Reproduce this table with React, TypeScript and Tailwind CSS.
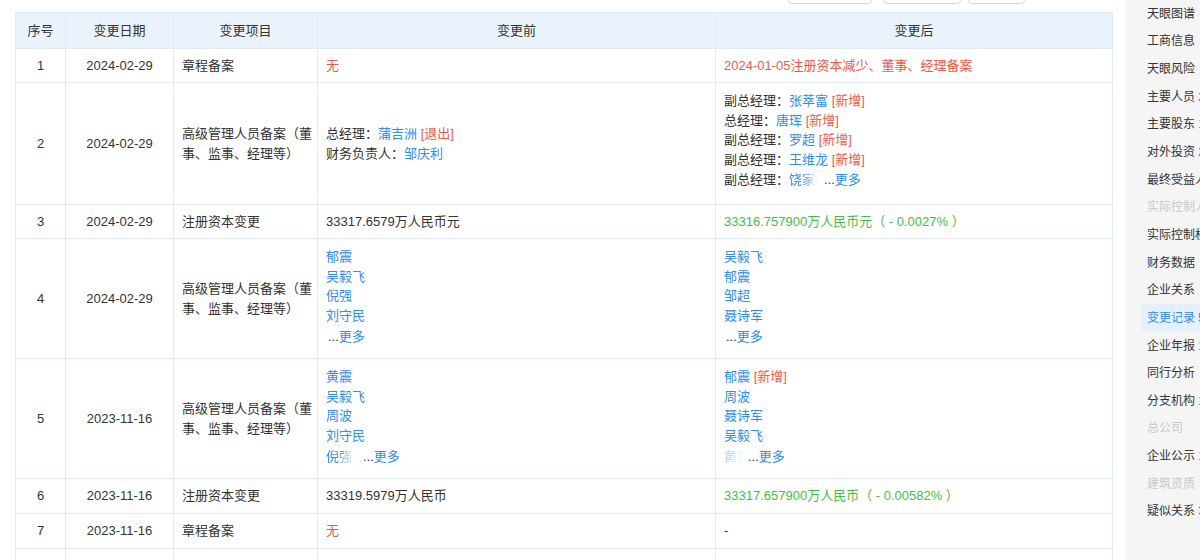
import type { ReactNode } from "react";

type Nav = { label: string; count?: string; state?: "off" | "on" };

const NAV: Nav[] = [
  { label: "天眼图谱" },
  { label: "工商信息" },
  { label: "天眼风险" },
  { label: "主要人员", count: "2" },
  { label: "主要股东", count: "1" },
  { label: "对外投资", count: "2" },
  { label: "最终受益人" },
  { label: "实际控制人", state: "off" },
  { label: "实际控制权" },
  { label: "财务数据" },
  { label: "企业关系" },
  { label: "变更记录", count: "5", state: "on" },
  { label: "企业年报", count: "1" },
  { label: "同行分析" },
  { label: "分支机构", count: "1" },
  { label: "总公司", state: "off" },
  { label: "企业公示", count: "1" },
  { label: "建筑资质", state: "off" },
  { label: "疑似关系", count: "3" },
];

const Name = ({ children }: { children: ReactNode }) => <span className="text-[#2f8cf0]">{children}</span>;
const Tag = ({ children }: { children: ReactNode }) => <span className="text-[#f0584a]"> [{children}]</span>;
const More = () => (
  <span>
    <span className="text-[#333]">...</span>
    <span className="text-[#2f8cf0]">更多</span>
  </span>
);

const td = "border border-[#e0ebf7] px-2 align-middle";
const tdTop = "border border-[#e0ebf7] pl-2 pr-2 pt-2 align-top";

export default function App() {
  return (
    <div className="flex h-[560px] w-[1200px] overflow-hidden bg-white font-['Liberation_Sans','Noto_Sans_CJK_SC',sans-serif] text-[13px] text-[#333]">
      <main className="flex w-[1127px] flex-col pl-[15px]">
        <div className="flex h-[12px] shrink-0 pl-[773px]">
          <div className="-mt-6 h-7 w-[84px] rounded border border-[#d6d6d6] bg-white" />
          <div className="-mt-6 ml-[11px] h-7 w-[78px] rounded border border-[#d6d6d6] bg-white" />
          <div className="-mt-6 ml-[7px] h-7 w-[57px] rounded border border-[#d6d6d6] bg-white" />
        </div>

        <table className="w-[1097px] shrink-0 table-fixed border-collapse leading-[19.5px]">
          <colgroup>
            <col className="w-[50px]" />
            <col className="w-[108px]" />
            <col className="w-[144px]" />
            <col className="w-[398px]" />
            <col className="w-[397px]" />
          </colgroup>
          <thead>
            <tr className="h-[36px] bg-[#eaf3fc]">
              <th className={`${td} text-center font-normal`}>序号</th>
              <th className={`${td} text-center font-normal`}>变更日期</th>
              <th className={`${td} text-center font-normal`}>变更项目</th>
              <th className={`${td} text-center font-normal`}>变更前</th>
              <th className={`${td} text-center font-normal`}>变更后</th>
            </tr>
          </thead>
          <tbody>
            <tr className="h-[34px]">
              <td className={`${td} text-center`}>1</td>
              <td className={`${td} text-center`}>2024-02-29</td>
              <td className={td}>章程备案</td>
              <td className={`${td} text-[#f0584a]`}>无</td>
              <td className={`${td} text-[#f0584a]`}>2024-01-05注册资本减少、董事、经理备案</td>
            </tr>

            <tr className="h-[122px]">
              <td className={`${td} text-center`}>2</td>
              <td className={`${td} text-center`}>2024-02-29</td>
              <td className={`${td} pr-1 leading-[20px]`}>高级管理人员备案（董事、监事、经理等）</td>
              <td className={td}>
                <div>总经理：<Name>蒲吉洲</Name><Tag>退出</Tag></div>
                <div>财务负责人：<Name>邹庆利</Name></div>
              </td>
              <td className={tdTop}>
                <div>副总经理：<Name>张萃富</Name><Tag>新增</Tag></div>
                <div>总经理：<Name>唐珲</Name><Tag>新增</Tag></div>
                <div>副总经理：<Name>罗超</Name><Tag>新增</Tag></div>
                <div>副总经理：<Name>王维龙</Name><Tag>新增</Tag></div>
                <div className="mt-[1px] flex">
                  <span>副总经理：</span>
                  <span className="inline-block w-[35px] overflow-hidden whitespace-nowrap text-[#2f8cf0] [mask-image:linear-gradient(to_right,#000_35%,transparent_85%)]">饶家华</span>
                  <More />
                </div>
              </td>
            </tr>

            <tr className="h-[34px]">
              <td className={`${td} text-center`}>3</td>
              <td className={`${td} text-center`}>2024-02-29</td>
              <td className={td}>注册资本变更</td>
              <td className={td}>33317.6579万人民币元</td>
              <td className={`${td} text-[#3fc140]`}>33316.757900万人民币元（ - 0.0027% ）</td>
            </tr>

            <tr className="h-[120px]">
              <td className={`${td} text-center`}>4</td>
              <td className={`${td} text-center`}>2024-02-29</td>
              <td className={`${td} pr-1 leading-[20px]`}>高级管理人员备案（董事、监事、经理等）</td>
              <td className={tdTop}>
                <div><Name>郁震</Name></div>
                <div><Name>吴毅飞</Name></div>
                <div><Name>倪强</Name></div>
                <div><Name>刘守民</Name></div>
                <div className="mt-[2px] pl-[2px]"><More /></div>
              </td>
              <td className={tdTop}>
                <div><Name>吴毅飞</Name></div>
                <div><Name>郁震</Name></div>
                <div><Name>邹超</Name></div>
                <div><Name>聂诗军</Name></div>
                <div className="mt-[2px] pl-[2px]"><More /></div>
              </td>
            </tr>

            <tr className="h-[120px]">
              <td className={`${td} text-center`}>5</td>
              <td className={`${td} text-center`}>2023-11-16</td>
              <td className={`${td} pr-1 leading-[20px]`}>高级管理人员备案（董事、监事、经理等）</td>
              <td className={tdTop}>
                <div><Name>黄震</Name></div>
                <div><Name>吴毅飞</Name></div>
                <div><Name>周波</Name></div>
                <div><Name>刘守民</Name></div>
                <div className="mt-[2px] flex">
                  <span className="inline-block w-[37px] overflow-hidden whitespace-nowrap text-[#2f8cf0] [mask-image:linear-gradient(to_right,#000_30%,transparent_80%)]">倪强</span>
                  <More />
                </div>
              </td>
              <td className={tdTop}>
                <div><Name>郁震</Name><Tag>新增</Tag></div>
                <div><Name>周波</Name></div>
                <div><Name>聂诗军</Name></div>
                <div><Name>吴毅飞</Name></div>
                <div className="mt-[2px] flex">
                  <span className="inline-block w-[24px] overflow-hidden whitespace-nowrap text-[#2f8cf0] [mask-image:linear-gradient(to_right,rgba(0,0,0,0.45),transparent_85%)]">黄震</span>
                  <More />
                </div>
              </td>
            </tr>

            <tr className="h-[35px]">
              <td className={`${td} text-center`}>6</td>
              <td className={`${td} text-center`}>2023-11-16</td>
              <td className={td}>注册资本变更</td>
              <td className={td}>33319.5979万人民币</td>
              <td className={`${td} text-[#3fc140]`}>33317.657900万人民币（ - 0.00582% ）</td>
            </tr>

            <tr className="h-[35px]">
              <td className={`${td} text-center`}>7</td>
              <td className={`${td} text-center`}>2023-11-16</td>
              <td className={td}>章程备案</td>
              <td className={`${td} text-[#f0584a]`}>无</td>
              <td className={td}>-</td>
            </tr>

            <tr className="h-[35px]">
              <td className={td} />
              <td className={td} />
              <td className={td} />
              <td className={td} />
              <td className={td} />
            </tr>
          </tbody>
        </table>
      </main>

      <aside className="flex w-[73px] flex-col overflow-hidden bg-[#f5f5f5] pl-[15px] text-[12px] shadow-[-2px_0_6px_rgba(0,0,0,0.03)]">
        {NAV.map((n) => (
          <div
            key={n.label}
            className={
              n.state === "on"
                ? "flex h-[27.65px] shrink-0 items-center whitespace-nowrap bg-[#e6f0fc] pl-[5px] text-[#2f8cf0]"
                : n.state === "off"
                ? "flex h-[27.65px] shrink-0 items-center whitespace-nowrap pl-[5px] text-[#c9c9c9]"
                : "flex h-[27.65px] shrink-0 items-center whitespace-nowrap pl-[5px] text-[#333]"
            }
          >
            {n.label}
            {n.count && <span className="ml-[3px] text-[#2f8cf0]">{n.count}</span>}
          </div>
        ))}
      </aside>
    </div>
  );
}
